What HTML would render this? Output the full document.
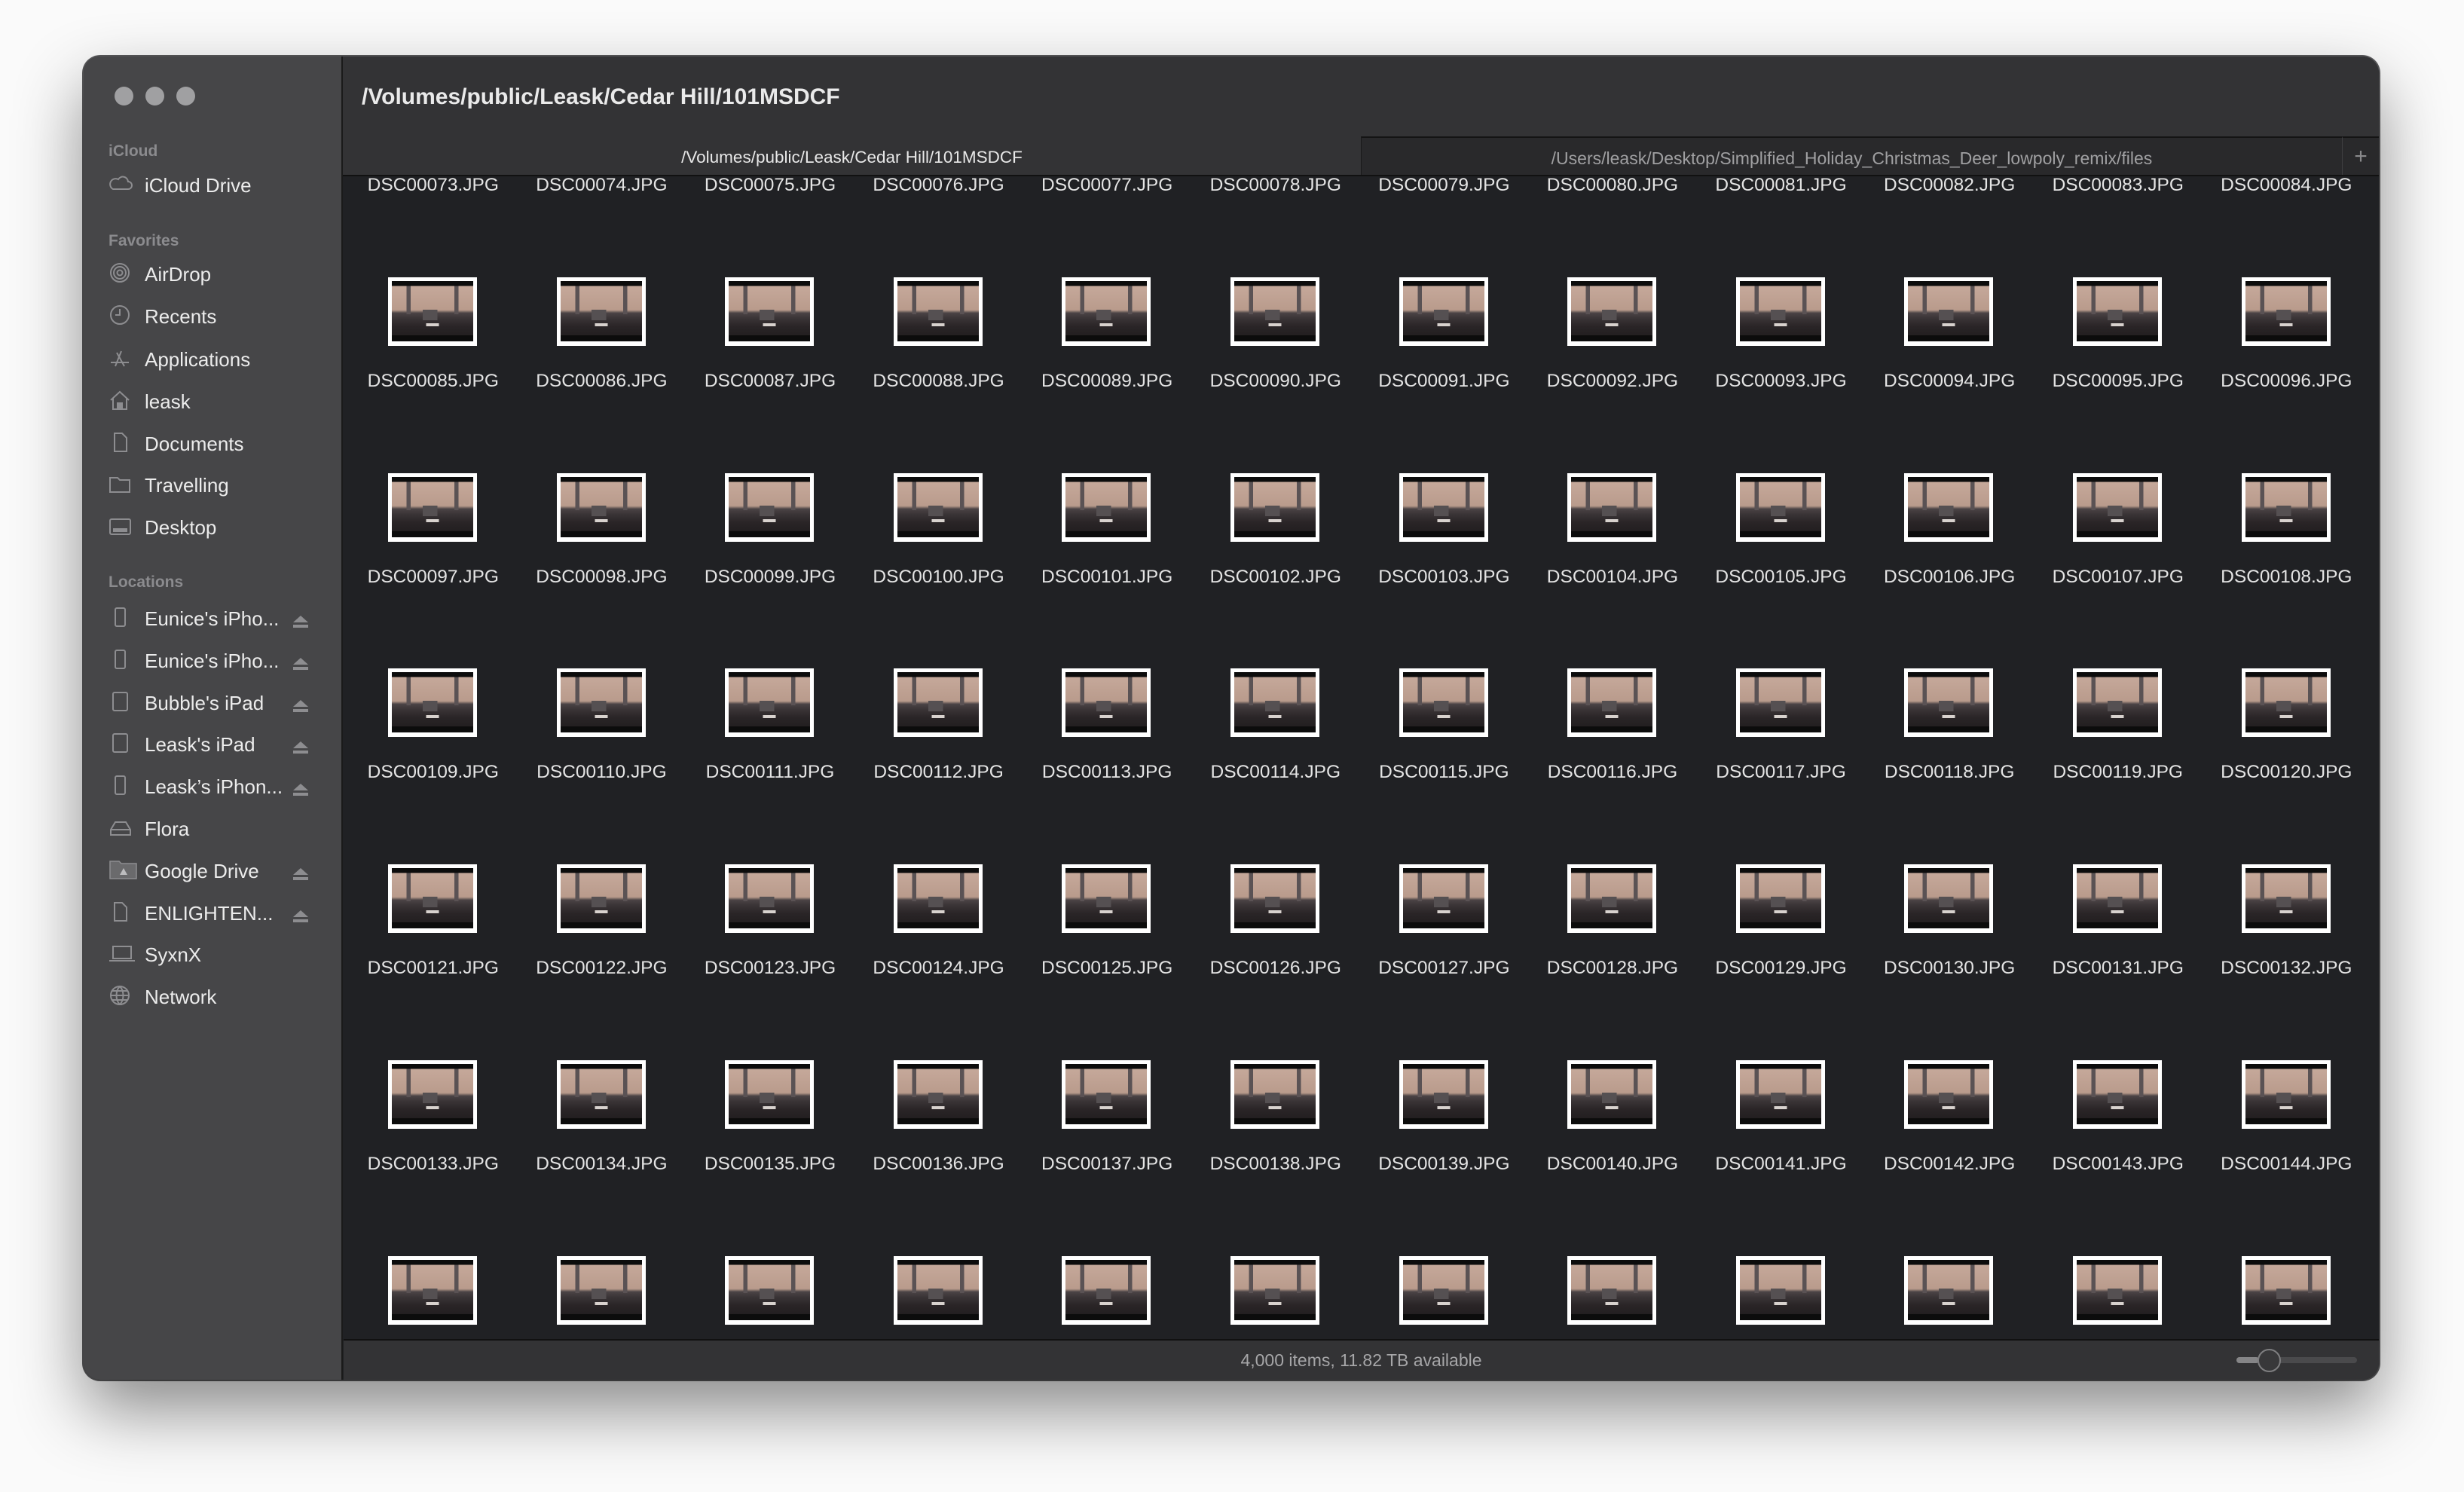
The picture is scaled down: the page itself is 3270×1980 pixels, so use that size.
<!DOCTYPE html>
<html><head><meta charset="utf-8">
<style>
*{margin:0;padding:0;box-sizing:border-box}
html,body{width:3270px;height:1980px;background:#fafafa;overflow:hidden;font-family:"Liberation Sans",sans-serif}
.win{position:absolute;left:111px;top:75px;width:3046px;height:1756px;border-radius:22px;overflow:hidden;background:#202124;box-shadow:0 40px 90px rgba(0,0,0,.45),0 0 0 2px #58585a}
.side{position:absolute;left:0;top:0;width:344px;height:100%;background:#464648;border-right:2px solid #1a1a1a}
.tl{position:absolute;top:40px;width:25px;height:25px;border-radius:50%;background:#a0a0a2}
.sh{position:absolute;left:33px;font-size:21px;font-weight:bold;color:#8b8b8e}
.si{position:absolute;left:81px;font-size:26px;color:#ececec;white-space:nowrap}
.si svg{position:absolute;left:-48px;top:-2px}
.ej{position:absolute;left:278px;width:20px;height:16px}
.ej:before{content:"";position:absolute;left:0;top:0;border-left:10px solid transparent;border-right:10px solid transparent;border-bottom:9px solid #8d8d90}
.ej:after{content:"";position:absolute;left:0;top:12px;width:20px;height:4px;background:#8d8d90}
.title{position:absolute;left:344px;top:0;right:0;height:106px;background:#333335}
.title h1{position:absolute;left:25px;top:37px;font-size:30px;font-weight:bold;color:#eaeaea}
.tabs{position:absolute;left:344px;top:106px;right:0;height:53px;background:#333335;border-bottom:2px solid #111}
.tab1{position:absolute;left:0;top:0;width:1351px;height:51px;text-align:center;line-height:56px;font-size:22.5px;color:#e8e8e8}
.tab2{position:absolute;left:1351px;top:0;width:1302px;height:51px;background:#29292b;border-top:2px solid #141414;border-left:1px solid #1a1a1a;text-align:center;line-height:54px;font-size:23px;color:#a0a0a2}
.plus{position:absolute;right:0;top:0;width:49px;height:51px;background:#29292b;border-top:2px solid #141414;border-left:1px solid #3e3e40;color:#8a8a8c;font-size:30px;text-align:center;line-height:50px}
.content{position:absolute;left:345px;top:159px;width:2701px;height:1543px;overflow:hidden;background:#202124}
.grid{position:absolute;left:7px;top:-188px;width:2690px;display:grid;grid-template-columns:repeat(12,223.6px);grid-auto-rows:259.8px}
.c{position:relative}
.c i{position:absolute;left:52px;top:62px;width:118px;height:91px;background:#fff;padding:5px 5px 6px 5px}
.c i:after{content:"";display:block;width:100%;height:100%;background:
linear-gradient(#0c0c0c 0 8%,transparent 8% 90%,#0c0c0c 90%),
linear-gradient(90deg,transparent 18%,#5a5254 18% 23%,transparent 23% 77%,#5a5254 77% 82%,transparent 82%) 0 0/100% 55% no-repeat,
linear-gradient(90deg,transparent 38%,#555052 38% 56%,transparent 56%) 0 58%/100% 18% no-repeat,
linear-gradient(90deg,transparent 42%,#d8d2ce 42% 58%,transparent 58%) 0 74%/100% 5% no-repeat,
linear-gradient(#c8ab9d 0%,#b99b8c 48%,#4a4345 53%,#3a3436 62%,#2a2527 75%,#1e1b1c 100%)}
.c span{position:absolute;left:0;width:100%;top:186px;text-align:center;font-size:24.5px;color:#e4e4e4;white-space:nowrap}
.status{position:absolute;left:345px;top:1702px;right:0;height:54px;background:#333335;border-top:2px solid #111}
.status p{position:absolute;left:0;width:100%;text-align:center;top:13px;font-size:23px;color:#a6a6a8}
.track{position:absolute;left:2512px;top:22px;width:160px;height:8px;border-radius:4px;background:#4a4a4c}
.track:before{content:"";position:absolute;left:0;top:0;width:30px;height:8px;border-radius:4px;background:#858587}
.knob{position:absolute;left:2540px;top:11px;width:31px;height:31px;border-radius:50%;border:2.5px solid #7e7e80;background:#38383a}
</style></head><body>
<div class="win">
<div class="side">
<div class="tl" style="left:41px"></div><div class="tl" style="left:82px"></div><div class="tl" style="left:123px"></div>
<div class="sh" style="top:114px">iCloud</div>
<div class="si" style="top:156px"><svg width="32" height="28" viewBox="0 0 32 28" fill="none" stroke="#8d8d90" stroke-width="2"><path d="M6 22h20a5 5 0 0 0 0-10 7 7 0 0 0-13-3A5 5 0 0 0 6 22z"/></svg>iCloud Drive</div>
<div class="sh" style="top:233px">Favorites</div>
<div class="si" style="top:274px"><svg width="30" height="30" viewBox="0 0 30 30" fill="none" stroke="#8d8d90" stroke-width="2"><circle cx="15" cy="15" r="12"/><circle cx="15" cy="15" r="8"/><circle cx="15" cy="15" r="3.5"/></svg>AirDrop</div>
<div class="si" style="top:330px"><svg width="30" height="30" viewBox="0 0 30 30" fill="none" stroke="#8d8d90" stroke-width="2"><circle cx="15" cy="15" r="12"/><path d="M15 7v8H9"/></svg>Recents</div>
<div class="si" style="top:387px"><svg width="30" height="30" viewBox="0 0 30 30" fill="none" stroke="#8d8d90" stroke-width="2"><path d="M9 26L17 6M21 26L11 8M3 21h24"/></svg>Applications</div>
<div class="si" style="top:443px"><svg width="30" height="30" viewBox="0 0 30 30" fill="none" stroke="#8d8d90" stroke-width="2"><path d="M3 15L15 4l12 11M6 13v14h18V13"/><rect x="12" y="19" width="6" height="8" fill="#8d8d90"/></svg>leask</div>
<div class="si" style="top:499px"><svg width="30" height="30" viewBox="0 0 30 30" fill="none" stroke="#8d8d90" stroke-width="2"><path d="M8 3h10l6 6v18H8z"/></svg>Documents</div>
<div class="si" style="top:554px"><svg width="30" height="30" viewBox="0 0 30 30" fill="none" stroke="#8d8d90" stroke-width="2"><path d="M2 7h10l3 3h13v16H2z"/></svg>Travelling</div>
<div class="si" style="top:610px"><svg width="30" height="30" viewBox="0 0 30 30" fill="none" stroke="#8d8d90" stroke-width="2"><rect x="2" y="6" width="27" height="20" rx="2"/><rect x="7" y="19" width="17" height="3" fill="#8d8d90"/></svg>Desktop</div>
<div class="sh" style="top:686px">Locations</div>
<div class="si" style="top:731px"><svg width="30" height="30" viewBox="0 0 30 30" fill="none" stroke="#8d8d90" stroke-width="2"><rect x="9" y="3" width="13" height="24" rx="2"/></svg>Eunice's iPho...</div><div class="ej" style="top:742px"></div>
<div class="si" style="top:787px"><svg width="30" height="30" viewBox="0 0 30 30" fill="none" stroke="#8d8d90" stroke-width="2"><rect x="9" y="3" width="13" height="24" rx="2"/></svg>Eunice's iPho...</div><div class="ej" style="top:798px"></div>
<div class="si" style="top:843px"><svg width="30" height="30" viewBox="0 0 30 30" fill="none" stroke="#8d8d90" stroke-width="2"><rect x="6" y="3" width="19" height="24" rx="2"/></svg>Bubble's iPad</div><div class="ej" style="top:854px"></div>
<div class="si" style="top:898px"><svg width="30" height="30" viewBox="0 0 30 30" fill="none" stroke="#8d8d90" stroke-width="2"><rect x="6" y="3" width="19" height="24" rx="2"/></svg>Leask's iPad</div><div class="ej" style="top:909px"></div>
<div class="si" style="top:954px"><svg width="30" height="30" viewBox="0 0 30 30" fill="none" stroke="#8d8d90" stroke-width="2"><rect x="9" y="3" width="13" height="24" rx="2"/></svg>Leask’s iPhon...</div><div class="ej" style="top:965px"></div>
<div class="si" style="top:1010px"><svg width="32" height="30" viewBox="0 0 32 30" fill="none" stroke="#8d8d90" stroke-width="2"><path d="M3 18L9 8h14l6 10v7H3z"/><path d="M3 18h26"/></svg>Flora</div>
<div class="si" style="top:1066px"><svg width="40" height="30" viewBox="0 0 40 30" fill="#6a6a6c" stroke="#8d8d90" stroke-width="1.5"><path d="M2 4h12l3 3h20v20H2z"/><path d="M15 22l5-9 5 9z" fill="#bdbdbf" stroke="none"/></svg>Google Drive</div><div class="ej" style="top:1077px"></div>
<div class="si" style="top:1122px"><svg width="30" height="30" viewBox="0 0 30 30" fill="none" stroke="#8d8d90" stroke-width="2"><path d="M8 3h10l6 6v18H8z"/></svg>ENLIGHTEN...</div><div class="ej" style="top:1133px"></div>
<div class="si" style="top:1177px"><svg width="36" height="30" viewBox="0 0 36 30" fill="none" stroke="#8d8d90" stroke-width="2"><path d="M6 6h24v16H6zM1 25h34"/></svg>SyxnX</div>
<div class="si" style="top:1233px"><svg width="30" height="30" viewBox="0 0 30 30" fill="none" stroke="#8d8d90" stroke-width="2"><circle cx="15" cy="15" r="12"/><path d="M3 15h24M15 3c-6 6-6 18 0 24M15 3c6 6 6 18 0 24M5 9h20M5 21h20"/></svg>Network</div>
</div>
<div class="title"><h1>/Volumes/public/Leask/Cedar Hill/101MSDCF</h1></div>
<div class="tabs"><div class="tab1">/Volumes/public/Leask/Cedar Hill/101MSDCF</div><div class="tab2">/Users/leask/Desktop/Simplified_Holiday_Christmas_Deer_lowpoly_remix/files</div><div class="plus">+</div></div>
<div class="content"><div class="grid">
<div class="c"><i></i><span>DSC00073.JPG</span></div><div class="c"><i></i><span>DSC00074.JPG</span></div><div class="c"><i></i><span>DSC00075.JPG</span></div><div class="c"><i></i><span>DSC00076.JPG</span></div><div class="c"><i></i><span>DSC00077.JPG</span></div><div class="c"><i></i><span>DSC00078.JPG</span></div><div class="c"><i></i><span>DSC00079.JPG</span></div><div class="c"><i></i><span>DSC00080.JPG</span></div><div class="c"><i></i><span>DSC00081.JPG</span></div><div class="c"><i></i><span>DSC00082.JPG</span></div><div class="c"><i></i><span>DSC00083.JPG</span></div><div class="c"><i></i><span>DSC00084.JPG</span></div>
<div class="c"><i></i><span>DSC00085.JPG</span></div><div class="c"><i></i><span>DSC00086.JPG</span></div><div class="c"><i></i><span>DSC00087.JPG</span></div><div class="c"><i></i><span>DSC00088.JPG</span></div><div class="c"><i></i><span>DSC00089.JPG</span></div><div class="c"><i></i><span>DSC00090.JPG</span></div><div class="c"><i></i><span>DSC00091.JPG</span></div><div class="c"><i></i><span>DSC00092.JPG</span></div><div class="c"><i></i><span>DSC00093.JPG</span></div><div class="c"><i></i><span>DSC00094.JPG</span></div><div class="c"><i></i><span>DSC00095.JPG</span></div><div class="c"><i></i><span>DSC00096.JPG</span></div>
<div class="c"><i></i><span>DSC00097.JPG</span></div><div class="c"><i></i><span>DSC00098.JPG</span></div><div class="c"><i></i><span>DSC00099.JPG</span></div><div class="c"><i></i><span>DSC00100.JPG</span></div><div class="c"><i></i><span>DSC00101.JPG</span></div><div class="c"><i></i><span>DSC00102.JPG</span></div><div class="c"><i></i><span>DSC00103.JPG</span></div><div class="c"><i></i><span>DSC00104.JPG</span></div><div class="c"><i></i><span>DSC00105.JPG</span></div><div class="c"><i></i><span>DSC00106.JPG</span></div><div class="c"><i></i><span>DSC00107.JPG</span></div><div class="c"><i></i><span>DSC00108.JPG</span></div>
<div class="c"><i></i><span>DSC00109.JPG</span></div><div class="c"><i></i><span>DSC00110.JPG</span></div><div class="c"><i></i><span>DSC00111.JPG</span></div><div class="c"><i></i><span>DSC00112.JPG</span></div><div class="c"><i></i><span>DSC00113.JPG</span></div><div class="c"><i></i><span>DSC00114.JPG</span></div><div class="c"><i></i><span>DSC00115.JPG</span></div><div class="c"><i></i><span>DSC00116.JPG</span></div><div class="c"><i></i><span>DSC00117.JPG</span></div><div class="c"><i></i><span>DSC00118.JPG</span></div><div class="c"><i></i><span>DSC00119.JPG</span></div><div class="c"><i></i><span>DSC00120.JPG</span></div>
<div class="c"><i></i><span>DSC00121.JPG</span></div><div class="c"><i></i><span>DSC00122.JPG</span></div><div class="c"><i></i><span>DSC00123.JPG</span></div><div class="c"><i></i><span>DSC00124.JPG</span></div><div class="c"><i></i><span>DSC00125.JPG</span></div><div class="c"><i></i><span>DSC00126.JPG</span></div><div class="c"><i></i><span>DSC00127.JPG</span></div><div class="c"><i></i><span>DSC00128.JPG</span></div><div class="c"><i></i><span>DSC00129.JPG</span></div><div class="c"><i></i><span>DSC00130.JPG</span></div><div class="c"><i></i><span>DSC00131.JPG</span></div><div class="c"><i></i><span>DSC00132.JPG</span></div>
<div class="c"><i></i><span>DSC00133.JPG</span></div><div class="c"><i></i><span>DSC00134.JPG</span></div><div class="c"><i></i><span>DSC00135.JPG</span></div><div class="c"><i></i><span>DSC00136.JPG</span></div><div class="c"><i></i><span>DSC00137.JPG</span></div><div class="c"><i></i><span>DSC00138.JPG</span></div><div class="c"><i></i><span>DSC00139.JPG</span></div><div class="c"><i></i><span>DSC00140.JPG</span></div><div class="c"><i></i><span>DSC00141.JPG</span></div><div class="c"><i></i><span>DSC00142.JPG</span></div><div class="c"><i></i><span>DSC00143.JPG</span></div><div class="c"><i></i><span>DSC00144.JPG</span></div>
<div class="c"><i></i><span>DSC00145.JPG</span></div><div class="c"><i></i><span>DSC00146.JPG</span></div><div class="c"><i></i><span>DSC00147.JPG</span></div><div class="c"><i></i><span>DSC00148.JPG</span></div><div class="c"><i></i><span>DSC00149.JPG</span></div><div class="c"><i></i><span>DSC00150.JPG</span></div><div class="c"><i></i><span>DSC00151.JPG</span></div><div class="c"><i></i><span>DSC00152.JPG</span></div><div class="c"><i></i><span>DSC00153.JPG</span></div><div class="c"><i></i><span>DSC00154.JPG</span></div><div class="c"><i></i><span>DSC00155.JPG</span></div><div class="c"><i></i><span>DSC00156.JPG</span></div>
</div></div>
<div class="status"><p>4,000 items, 11.82 TB available</p><div class="track"></div><div class="knob"></div></div>
</div>
</body></html>
